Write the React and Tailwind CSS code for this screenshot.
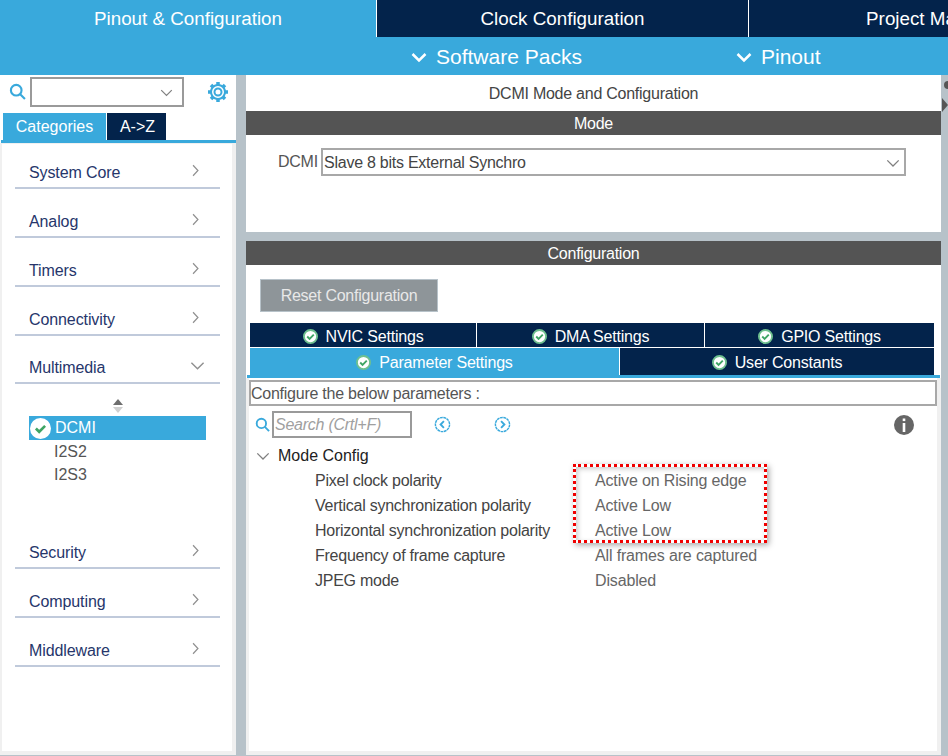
import React from "react";

const Chevron = ({ dir = "right", className = "", width = 1.5 }) => (
  <svg viewBox="0 0 16 16" className={className} fill="none" stroke="currentColor" strokeWidth={width}>
    {dir === "right" ? <path d="M5 1.5l6 6.5-6 6.5" /> : <path d="M1.5 5l6.5 6.5L14.5 5" />}
  </svg>
);

const CheckBadge = ({ className = "", ring = "#6fc08f" }) => (
  <svg viewBox="0 0 16 16" className={className}>
    <circle cx="8" cy="8" r="7" fill="#ffffff" stroke={ring} strokeWidth="2" />
    <path d="M4.5 8l2.5 2.5 4.5-4.5" fill="none" stroke="#3fa564" strokeWidth="2" />
  </svg>
);

const SearchIcon = ({ className = "" }) => (
  <svg viewBox="0 0 16 16" className={className} fill="none" stroke="#39a9dc" strokeWidth="2">
    <circle cx="6.8" cy="6.8" r="5" />
    <path d="M10.5 10.5l4.5 4.5" />
  </svg>
);

const GearIcon = () => (
  <svg viewBox="0 0 22 22" className="w-[22px] h-[22px]" fill="none">
    <path
      d="M11 1v3M11 18v3M1 11h3M18 11h3M4 4l2 2M16 16l2 2M18 4l-2 2M6 16l-2 2"
      stroke="#39a9dc"
      strokeWidth="3.5"
    />
    <circle cx="11" cy="11" r="7" stroke="#39a9dc" strokeWidth="2" />
    <circle cx="11" cy="11" r="5.2" fill="#ffffff" />
    <circle cx="11" cy="11" r="3.5" stroke="#39a9dc" strokeWidth="2" />
  </svg>
);

const RoundArrow = ({ left }) => (
  <svg viewBox="0 0 18 18" className="w-[17px] h-[17px]" fill="none" stroke="#39a9dc">
    <circle cx="9" cy="9" r="7.5" strokeWidth="1.5" strokeDasharray="3 0.6" />
    <path d={left ? "M10.5 5.5L7 9l3.5 3.5" : "M7.5 5.5L11 9l-3.5 3.5"} strokeWidth="2" />
  </svg>
);

const InfoIcon = () => (
  <svg viewBox="0 0 20 20" className="w-5 h-5">
    <circle cx="10" cy="10" r="10" fill="#666666" />
    <rect x="8.7" y="3.5" width="2.6" height="2.6" fill="#ffffff" />
    <rect x="8.7" y="8" width="2.6" height="9" fill="#ffffff" />
  </svg>
);

const categories = [
  ["System Core", "h-[45px]"],
  ["Analog", "h-[49px]"],
  ["Timers", "h-[49px]"],
  ["Connectivity", "h-[49px]"],
];

const bottomCategories = ["Security", "Computing", "Middleware"];

const params = [
  ["Pixel clock polarity", "Active on Rising edge"],
  ["Vertical synchronization polarity", "Active Low"],
  ["Horizontal synchronization polarity", "Active Low"],
  ["Frequency of frame capture", "All frames are captured"],
  ["JPEG mode", "Disabled"],
];

const CategoryRow = ({ name, height, open }) => (
  <div className={`${height} ml-[13px] mr-[12px] flex items-end justify-between pl-[14px] pr-[18px] pb-[4px] border-b-2 border-[#c0cadb] text-[16px] tracking-[-0.1px] text-[#26366b]`}>
    <span className="leading-[20px]">{name}</span>
    <Chevron dir={open ? "down" : "right"} className={`text-[#909090] mb-[5px] ${open ? "w-[15px] h-[15px] -mr-[3px]" : "w-[13px] h-[15px]"}`} />
  </div>
);

const SettingTab = ({ label, className }) => (
  <div className={`flex items-center justify-center gap-[8px] text-white text-[16px] tracking-[-0.2px] ${className}`}>
    <CheckBadge className="w-[15px] h-[15px]" />
    <span>{label}</span>
  </div>
);

export default function App() {
  return (
    <div className="relative w-[948px] h-[756px] overflow-hidden bg-[#b7c2c9] font-['Liberation_Sans',Arial,sans-serif]">
      {/* top tabs */}
      <div className="flex h-[37px] text-white text-[18.8px] bg-white gap-[1px]">
        <div className="w-[376px] shrink-0 bg-[#39a9dc] flex items-center justify-center pt-[1px]">Pinout &amp; Configuration</div>
        <div className="w-[371px] shrink-0 bg-[#03234b] flex items-center justify-center pt-[1px]">Clock Configuration</div>
        <div className="w-[372px] shrink-0 bg-[#03234b] flex items-center justify-center pt-[1px]">Project Manager</div>
      </div>
      <div className="h-[38px] bg-[#39a9dc] text-white text-[21px] flex items-center pl-[411px] pt-[2px]">
        <div className="w-[325px] flex items-center gap-[9px]">
          <Chevron dir="down" width={2.5} className="w-4 h-4" />
          <span>Software Packs</span>
        </div>
        <div className="flex items-center gap-[9px]">
          <Chevron dir="down" width={2.5} className="w-4 h-4" />
          <span>Pinout</span>
        </div>
      </div>

      <div className="flex h-[680px]">
        {/* left panel */}
        <div className="w-[236px] h-[680px] shrink-0 bg-white flex flex-col">
          <div className="h-[38px] flex items-start pt-[2px] pl-[9px]">
            <SearchIcon className="w-[17px] h-[17px] mt-[6px]" />
            <div className="ml-[4px] w-[154px] h-[30px] border-2 border-[#9a9a9a] flex items-center justify-end pr-[9px]">
              <Chevron dir="down" className="w-[13px] h-[13px] text-[#808080]" />
            </div>
            <div className="ml-[23px] mt-[4px]">
              <GearIcon />
            </div>
          </div>
          <div className="flex pl-[3px] h-[27px] gap-[1px] text-[16px] text-white">
            <div className="w-[103px] bg-[#39a9dc] flex items-center justify-center">Categories</div>
            <div className="w-[59px] bg-[#03234b] flex items-center justify-center pl-[2px]">A-&gt;Z</div>
          </div>
          <div className="h-[3px] ml-[1px] bg-[#39a9dc]" />
          <div className="flex-1 bg-[#f0f0f0] pl-[2px] pr-[4px] pb-[4px] pt-[1px]">
            <div className="h-full bg-white">
              {categories.map(([name, height]) => (
                <CategoryRow key={name} name={name} height={height} />
              ))}
              <CategoryRow name="Multimedia" height="h-[48px]" open />
              <div className="h-[136px] pl-[27px] text-[16px]">
                <div className="h-[32px] flex items-end justify-center w-[177px] pb-[2px]">
                  <svg viewBox="0 0 12 15" className="w-[12px] h-[15px]">
                    <path d="M6 0l5 6H1z" fill="#6e6e6e" />
                    <path d="M6 14L1 8h10z" fill="#d0d0d0" />
                  </svg>
                </div>
                <div className="h-[24px] w-[177px] bg-[#39a9dc] text-white flex items-center">
                  <CheckBadge ring="#ffffff" className="w-[21px] h-[21px] ml-[1px] mr-[4px]" />
                  <span>DCMI</span>
                </div>
                <div className="h-[24px] pl-[25px] flex items-center text-[#555555]">I2S2</div>
                <div className="h-[22px] pl-[25px] flex items-center text-[#555555]">I2S3</div>
              </div>
              {bottomCategories.map((name) => (
                <CategoryRow key={name} name={name} height="h-[49px]" />
              ))}
            </div>
          </div>
        </div>

        {/* right side */}
        <div className="w-[695px] ml-[10px] shrink-0 flex flex-col gap-[9px] text-[16px] tracking-[-0.25px]">
          <div className="h-[157px] bg-white">
            <div className="h-[36px] pt-[2px] flex items-center justify-center text-[#444444]">DCMI Mode and Configuration</div>
            <div className="h-[24px] pt-[2px] bg-[#545454] text-white flex items-center justify-center">Mode</div>
            <div className="flex items-center pt-[13px] pl-[32px] text-[#555555]">
              <span className="w-[43px]">DCMI</span>
              <div className="w-[585px] h-[28px] border-2 border-[#a8a8a8] flex items-center justify-between pl-[1px] pr-[4px] pt-[1px] text-[#444444]">
                <span>Slave 8 bits External Synchro</span>
                <Chevron dir="down" className="w-[14px] h-[14px] text-[#808080]" />
              </div>
            </div>
          </div>

          <div className="flex-1 bg-white flex flex-col">
            <div className="h-[24px] pt-[2px] bg-[#545454] text-white flex items-center justify-center">Configuration</div>
            <div className="pt-[14px] pl-[14px]">
              <div className="w-[178px] h-[33px] bg-[#8e9599] border border-[#b7c2c9] text-[#e8e8e8] flex items-center justify-center">Reset Configuration</div>
            </div>
            <div className="mt-[11px] ml-[4px] w-[684px] flex gap-[1px] h-[24px]">
              <SettingTab label="NVIC Settings" className="w-[226px] bg-[#03234b] pt-[3px]" />
              <SettingTab label="DMA Settings" className="w-[227px] bg-[#03234b] pt-[3px]" />
              <SettingTab label="GPIO Settings" className="flex-1 bg-[#03234b] pt-[3px]" />
            </div>
            <div className="mt-[1px] ml-[4px] w-[684px] flex gap-[1px] h-[27px]">
              <SettingTab label="Parameter Settings" className="w-[369px] bg-[#39a9dc] pt-[2px]" />
              <SettingTab label="User Constants" className="flex-1 bg-[#03234b] pt-[2px]" />
            </div>
            <div className="ml-[1px] w-[693px] h-[3px] bg-[#39a9dc]" />

            {/* parameter area, framed in light gray */}
            <div className="flex-1 border-l-[3px] border-r-[4px] border-b-[4px] border-[#f0f0f0]">
              <div className="mt-[2px] w-[688px] h-[26px] border-2 border-[#a8a8a8] flex items-center pt-[1px] text-[#555555]">
                Configure the below parameters :
              </div>
              <div className="mt-[5px] flex items-center h-[27px] pl-[6px]">
                <SearchIcon className="w-[15px] h-[15px]" />
                <div className="ml-[2px] w-[140px] h-[27px] border-2 border-[#9a9a9a] flex items-center pl-[1px] pt-[1px] italic text-[#a0a0a0]">Search (Crtl+F)</div>
                <div className="ml-[22px]"><RoundArrow left /></div>
                <div className="ml-[43px]"><RoundArrow /></div>
                <div className="ml-[383px]"><InfoIcon /></div>
              </div>
              <div className="mt-[5px] flex items-center h-[25px] pl-[7px] text-[#222222] tracking-normal">
                <Chevron dir="down" className="w-[14px] h-[14px] text-[#808080] mr-[8px]" />
                Mode Config
              </div>
              {params.map(([label, value]) => (
                <div key={label} className="flex items-center h-[25px]">
                  <span className="w-[346px] pl-[66px] shrink-0 text-[#444444]">{label}</span>
                  <span className="text-[#666666] tracking-[-0.15px]">{value}</span>
                </div>
              ))}
            </div>
          </div>
        </div>

        {/* cut off toolbar glyphs on the right edge */}
        <svg viewBox="0 0 6 40" className="w-[6px] h-[40px] shrink-0 mt-[5px] ml-[1px]">
          <circle cx="6" cy="5" r="4" fill="#555555" />
          <path d="M0 18l6 7-6 7z" fill="#555555" />
        </svg>
      </div>

      {/* red highlight drawn over the parameter values */}
      <div className="absolute left-[573px] top-[464px] w-[194px] h-[79px] border-[3px] border-dotted border-[#f00000] shadow-[2px_2px_6px_rgba(0,0,0,0.35),inset_2px_2px_5px_rgba(0,0,0,0.2)]" />
    </div>
  );
}
